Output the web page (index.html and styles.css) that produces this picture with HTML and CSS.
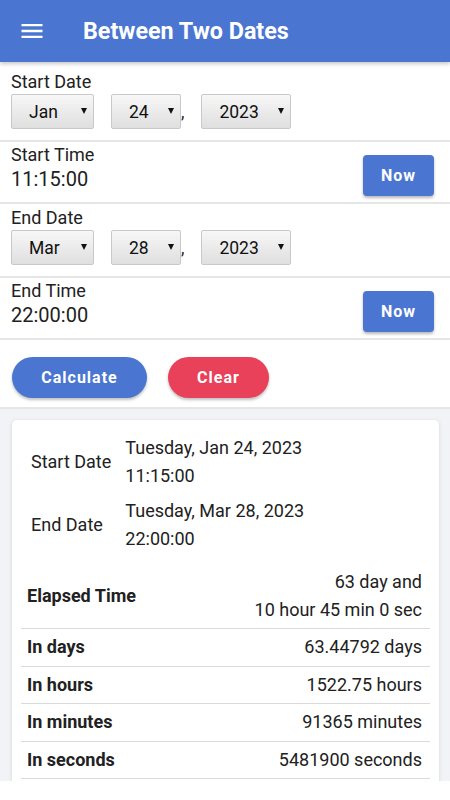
FILE: index.html
```html
<!DOCTYPE html>
<html>
<head>
    <title>Between Two Dates</title>
    <link rel="stylesheet" href="styles.css">
</head>
<body>
    <div class="app">
        <header class="topbar">
            <svg class="menu-icon" viewBox="0 0 24 24" width="28" height="28">
                <path fill="#fff" d="M3 18h18v-2H3v2zm0-5h18v-2H3v2zm0-7v2h18V6H3z"/>
            </svg>
            <h1>Between Two Dates</h1>
        </header>

        <section class="date-section first">
            <div class="field-label">Start Date</div>
            <div class="date-row">
                <span class="select month"><select><option>Jan</option><option>Feb</option><option>Mar</option></select></span>
                <span class="select day"><select><option>24</option></select></span><span class="comma">,</span>
                <span class="select year"><select><option>2023</option></select></span>
            </div>
        </section>

        <section class="time-section">
            <div>
                <div class="field-label">Start Time</div>
                <div class="time-value">11:15:00</div>
            </div>
            <button type="button" class="now-button">Now</button>
        </section>

        <section class="date-section">
            <div class="field-label">End Date</div>
            <div class="date-row">
                <span class="select month"><select><option>Mar</option></select></span>
                <span class="select day"><select><option>28</option></select></span><span class="comma">,</span>
                <span class="select year"><select><option>2023</option></select></span>
            </div>
        </section>

        <section class="time-section">
            <div>
                <div class="field-label">End Time</div>
                <div class="time-value">22:00:00</div>
            </div>
            <button type="button" class="now-button">Now</button>
        </section>

        <section class="actions">
            <button type="button" class="pill calculate">Calculate</button>
            <button type="button" class="pill clear">Clear</button>
        </section>

        <div class="results">
            <div class="card">
                <div class="summary">
                    <div class="summary-label">Start Date</div>
                    <div class="summary-value">Tuesday, Jan 24, 2023<br>11:15:00</div>
                    <div class="summary-label">End Date</div>
                    <div class="summary-value">Tuesday, Mar 28, 2023<br>22:00:00</div>
                </div>

                <div class="result-row elapsed">
                    <span class="result-name">Elapsed Time</span>
                    <span class="result-value">63 day and<br>10 hour 45 min 0 sec</span>
                </div>
                <div class="result-row">
                    <span class="result-name">In days</span>
                    <span class="result-value">63.44792 days</span>
                </div>
                <div class="result-row">
                    <span class="result-name">In hours</span>
                    <span class="result-value">1522.75 hours</span>
                </div>
                <div class="result-row">
                    <span class="result-name">In minutes</span>
                    <span class="result-value">91365 minutes</span>
                </div>
                <div class="result-row">
                    <span class="result-name">In seconds</span>
                    <span class="result-value">5481900 seconds</span>
                </div>
            </div>
        </div>
    </div>
</body>
</html>
```

FILE: styles.css
```css
body {
    margin: 0;
    background: #fff;
    font-family: Roboto, "Liberation Sans", sans-serif;
    color: #212121;
}

.app {
    height: 781px;
    overflow: hidden;
    display: flex;
    flex-direction: column;
    background: #fff;
}

.topbar {
    position: relative;
    z-index: 1;
    flex: none;
    height: 62px;
    display: flex;
    align-items: center;
    background: #4a76d1;
    box-shadow: 0 2px 4px rgba(0, 0, 0, 0.22);
}

.menu-icon {
    margin-left: 18px;
}

.topbar h1 {
    margin: 0 0 0 37px;
    font-size: 23.3px;
    font-weight: 700;
    color: #fff;
}

.field-label {
    font-size: 18px;
    line-height: 21px;
}

/* date pickers */
.date-section {
    flex: none;
    padding: 3px 11px 11px 11px;
    border-bottom: 2px solid #e6e6e6;
}

.date-section.first {
    padding-top: 9px;
}

.date-row {
    display: flex;
    align-items: baseline;
    margin-top: 2px;
}

.select {
    position: relative;
    display: inline-block;
}

.select select {
    appearance: none;
    -webkit-appearance: none;
    box-sizing: border-box;
    height: 35px;
    padding: 0 0 0 17px;
    border: 1px solid #c9c9c9;
    border-radius: 2px;
    background: linear-gradient(#f7f7f7, #dfdfdf);
    font-family: Roboto, "Liberation Sans", sans-serif;
    font-size: 17.5px;
    color: #111;
}

.select::after {
    content: "";
    position: absolute;
    right: 7px;
    top: 14px;
    border-left: 3px solid transparent;
    border-right: 3px solid transparent;
    border-top: 6px solid #111;
}

.month select { width: 83px; }
.day select { width: 70px; }
.year select { width: 90px; }

.month {
    margin-right: 17px;
}

.comma {
    font-size: 17.5px;
    margin-right: 17px;
}

/* time rows */
.time-section {
    flex: none;
    display: flex;
    justify-content: space-between;
    align-items: flex-start;
    padding: 2px 16px 6px 11px;
    border-bottom: 2px solid #e6e6e6;
}

.time-value {
    margin-top: 2px;
    font-size: 20px;
    line-height: 24px;
}

.now-button {
    margin-top: 11px;
    width: 71px;
    height: 41px;
    border: none;
    border-radius: 4px;
    background: #4a76d1;
    color: #fff;
    font-family: Roboto, "Liberation Sans", sans-serif;
    font-size: 16px;
    font-weight: 700;
    letter-spacing: 1px;
    box-shadow: 0 2px 3px rgba(0, 0, 0, 0.28);
}

/* buttons */
.actions {
    flex: none;
    display: flex;
    gap: 21px;
    padding: 17px 11px 9px 12px;
    border-bottom: 2px solid #e6e6e6;
}

.pill {
    height: 41px;
    border: none;
    border-radius: 21px;
    color: #fff;
    font-family: Roboto, "Liberation Sans", sans-serif;
    font-size: 16px;
    font-weight: 700;
    letter-spacing: 1px;
    box-shadow: 0 2px 3px rgba(0, 0, 0, 0.25);
}

.calculate {
    width: 135px;
    background: #4a76d1;
}

.clear {
    width: 101px;
    background: #e9415a;
}

/* results */
.results {
    flex: 1;
    padding: 11px 11px 0 12px;
    background: #f2f3f7;
}

.card {
    padding: 14px 9px 40px;
    background: #fff;
    border-radius: 5px;
    box-shadow: 0 1px 4px rgba(0, 0, 0, 0.12);
}

.summary {
    display: grid;
    grid-template-columns: auto 1fr;
    column-gap: 14px;
    row-gap: 7px;
    align-items: center;
    padding-left: 10px;
    font-size: 18px;
    line-height: 28px;
}

.result-row {
    display: flex;
    justify-content: space-between;
    align-items: center;
    padding: 5px 8px 5px 6px;
    border-bottom: 1px solid #dadada;
    font-size: 18px;
    line-height: 26.5px;
}

.result-row.elapsed {
    margin-top: 15px;
    padding-top: 0;
    padding-bottom: 4px;
    line-height: 28px;
}

.result-name {
    font-weight: 700;
}

.result-value {
    text-align: right;
}
```
